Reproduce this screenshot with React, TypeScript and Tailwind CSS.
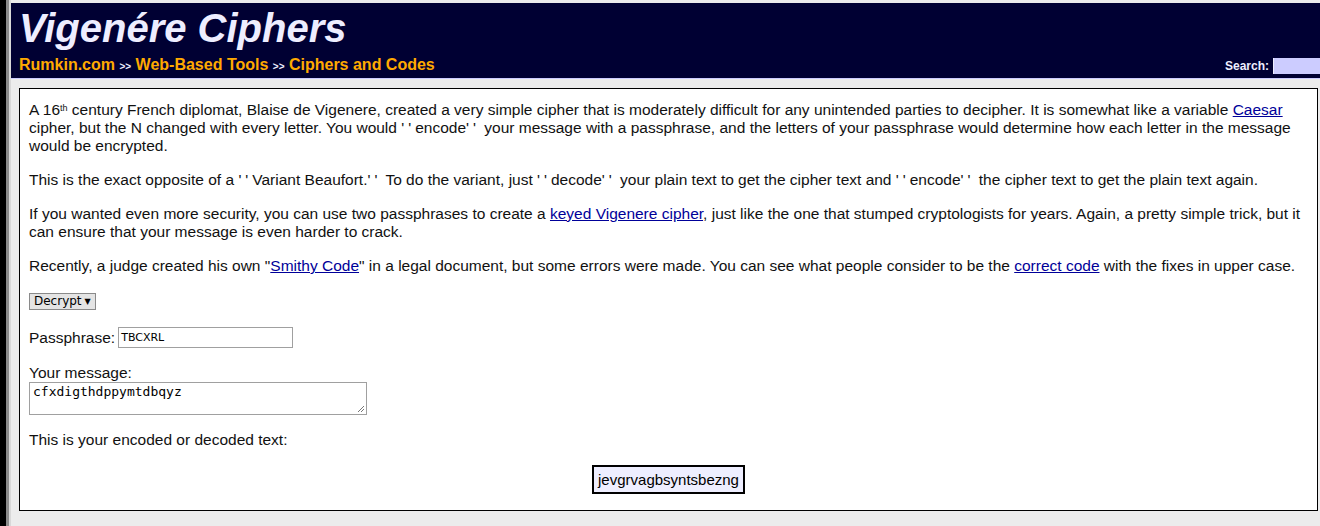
import React from "react";

function Q() {
  return <span className="tracking-[4px]">''</span>;
}

export default function App() {
  const link = "text-[#000099] underline";
  return (
    <div className="flex w-[1320px] h-[526px] overflow-hidden font-['Liberation_Sans',Arial,sans-serif]">
      <div className="w-[6px] shrink-0 bg-black" />
      <div className="w-[3px] shrink-0 bg-[#8c8c8c]" />
      <div className="w-[2px] shrink-0 bg-[#d8d8d8]" />
      <div className="flex-1 flex flex-col bg-[#ececec] pt-[3px]">
        <div className="h-[75px] bg-[#000033] flex flex-col pl-[8px]">
          <div className="text-[40px] leading-[44px] font-bold italic text-[#eeeeff] mt-[3px]">Vigenére Ciphers</div>
          <div className="flex items-end justify-between mt-[6px]">
            <div className="text-[16px] font-bold text-[#ffaa00] leading-[18px]">
              Rumkin.com <span className="text-[10px] text-[#eeeeff]">&gt;&gt;</span> Web-Based Tools{" "}
              <span className="text-[10px] text-[#eeeeff]">&gt;&gt;</span> Ciphers and Codes
            </div>
            <div className="flex items-center gap-[4px] mb-[1px]">
              <span className="text-[12px] font-bold text-[#eeeeff]">Search:</span>
              <div className="w-[47px] h-[16px] bg-[#ccccff] border-l border-[#eeeeff]" />
            </div>
          </div>
        </div>
        <div className="h-[1px] bg-[#ccccff]" />
        <div className="mt-[9px] ml-[8px] mr-[2px] border border-black bg-white px-[9px] pt-[12px] pb-[16px] text-[15.5px] leading-[18px] text-[#111]">
          <p>
            A 16<sup className="text-[9px]">th</sup> century French diplomat, Blaise de Vigenere, created a very simple cipher that is moderately difficult for any unintended parties to decipher. It is somewhat like a variable <span className={link}>Caesar</span> cipher, but the N changed with every letter. You would <Q />encode<Q /> your message with a passphrase, and the letters of your passphrase would determine how each letter in the message would be encrypted.
          </p>
          <p className="mt-[16px]">
            This is the exact opposite of a <Q />Variant Beaufort.<Q /> To do the variant, just <Q />decode<Q /> your plain text to get the cipher text and <Q />encode<Q /> the cipher text to get the plain text again.
          </p>
          <p className="mt-[16px]">
            If you wanted even more security, you can use two passphrases to create a <span className={link}>keyed Vigenere cipher</span>, just like the one that stumped cryptologists for years. Again, a pretty simple trick, but it can ensure that your message is even harder to crack.
          </p>
          <p className="mt-[16px]">
            Recently, a judge created his own "<span className={link}>Smithy Code</span>" in a legal document, but some errors were made. You can see what people consider to be the <span className={link}>correct code</span> with the fixes in upper case.
          </p>
          <div className="mt-[16px] leading-[17px]">
            <div className="inline-flex items-center h-[17px] px-[4px] border border-[#8a8a8a] bg-[#e4e4e4] font-['DejaVu_Sans',sans-serif] text-[12px] leading-[15px] text-black">
              Decrypt<span className="ml-[3px] text-[8px]">▼</span>
            </div>
          </div>
          <div className="mt-[17px] flex items-center">
            <span>Passphrase:</span>
            <div className="ml-[3px] w-[175px] h-[21px] border border-[#a0a0a0] bg-white font-['DejaVu_Sans',sans-serif] text-[11px] leading-[19px] pl-[2px] text-black">TBCXRL</div>
          </div>
          <div className="mt-[16px]">Your message:</div>
          <div className="relative w-[338px] h-[33px] border border-[#a0a0a0] bg-white font-['DejaVu_Sans_Mono',monospace] text-[13px] leading-[16px] pl-[3px] pt-[1px] text-black">
            cfxdigthdppymtdbqyz
            <svg className="absolute right-[1px] bottom-[1px]" width="8" height="8" viewBox="0 0 8 8">
              <line x1="7" y1="1" x2="1" y2="7" stroke="#777" strokeWidth="1" />
              <line x1="7" y1="4" x2="4" y2="7" stroke="#777" strokeWidth="1" />
            </svg>
          </div>
          <div className="mt-[16px]">This is your encoded or decoded text:</div>
          <div className="mt-[16px] flex justify-center">
            <div className="border-2 border-black bg-[#eeeeff] px-[4px] h-[29px] flex items-center text-[15px] text-black">jevgrvagbsyntsbezng</div>
          </div>
        </div>
      </div>
    </div>
  );
}
